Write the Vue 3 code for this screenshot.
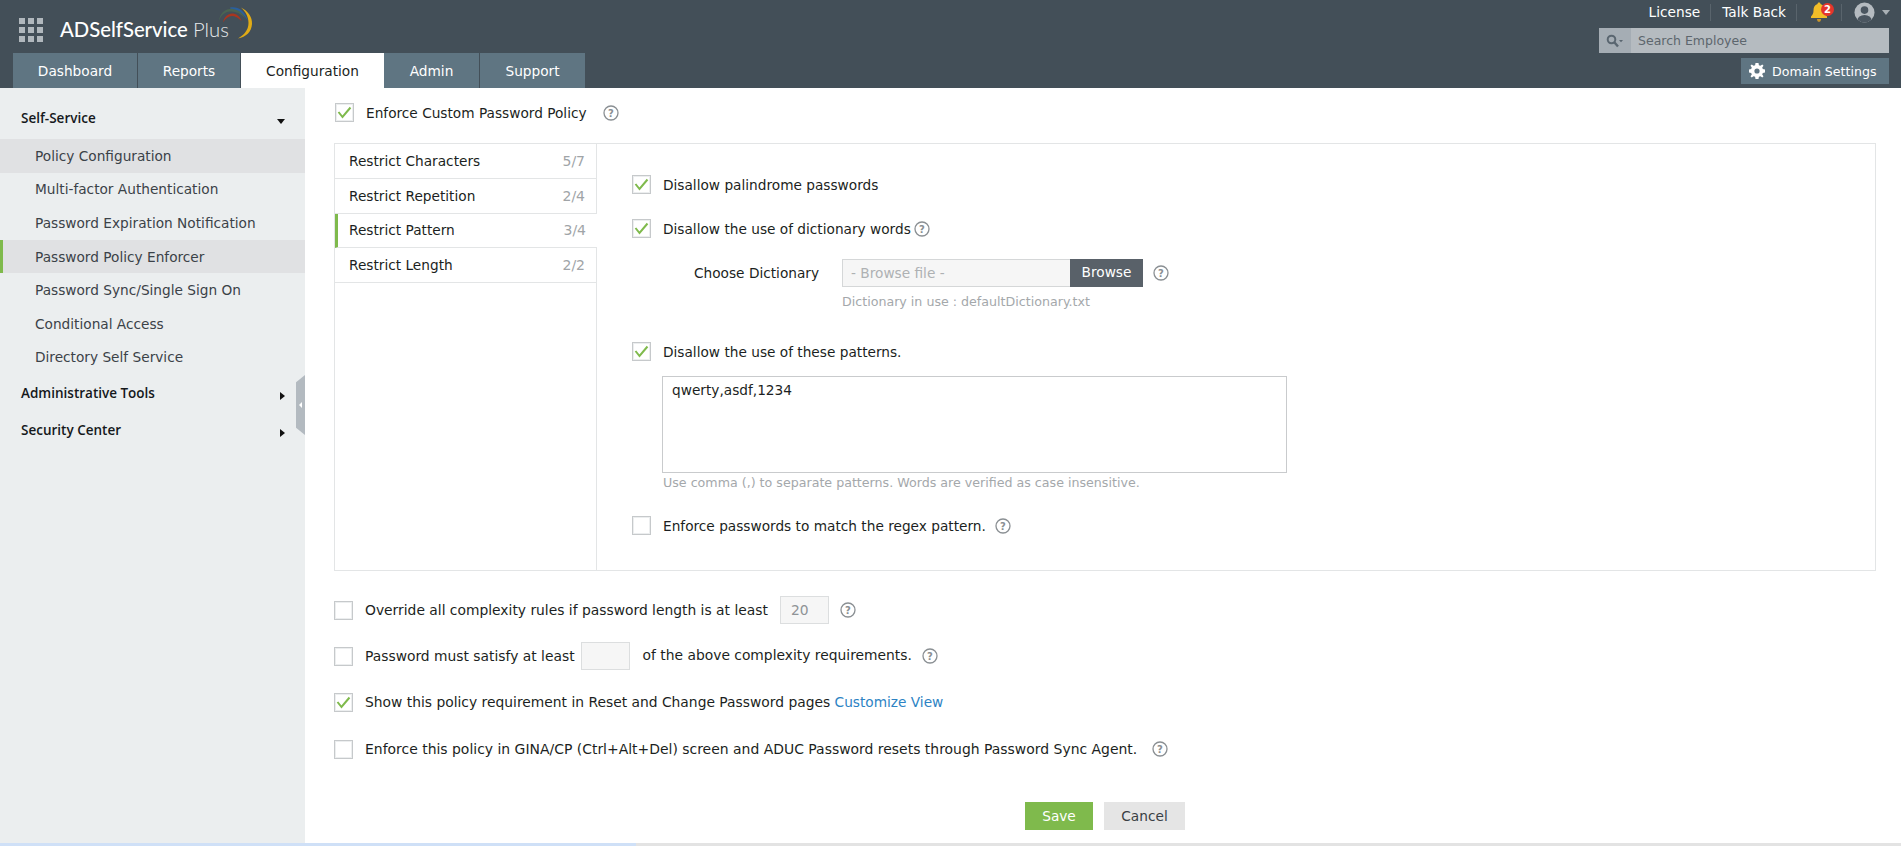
<script setup>
const tabs = [
  { label: 'Dashboard', w: 125 },
  { label: 'Reports', w: 103 },
  { label: 'Configuration', w: 143, active: true },
  { label: 'Admin', w: 96 },
  { label: 'Support', w: 106 }
]
const items = [
  { label: 'Policy Configuration', hl: true },
  { label: 'Multi-factor Authentication' },
  { label: 'Password Expiration Notification' },
  { label: 'Password Policy Enforcer', hl: true, bar: true },
  { label: 'Password Sync/Single Sign On' },
  { label: 'Conditional Access' },
  { label: 'Directory Self Service' }
]
const restricts = [
  { label: 'Restrict Characters', n: '5/7' },
  { label: 'Restrict Repetition', n: '2/4' },
  { label: 'Restrict Pattern', n: '3/4', active: true },
  { label: 'Restrict Length', n: '2/2' }
]
const dots = Array.from({ length: 9 })
</script>

<template>
  <div class="page">
    <header class="top">
      <div class="top-left">
        <div class="brand">
          <div class="grid"><i v-for="(d, i) in dots" :key="i"></i></div>
          <div class="logo">
            <span class="logo-b">ADSelfService</span> <span class="logo-l">Plus</span>
            <svg class="arc" width="35" height="33" viewBox="0 0 35 33">
              <path d="M23 1.500 C30 5 34.500 11 34 18 C33.500 26 28 31 20 32.500 C26 29 30.500 24 30.500 17 C30.500 11 28 6 23 1.500 Z" fill="#e0ab16"/>
              <path d="M12 1.500 C19 0 27 4 30 15 C26 8 20 4 13 4 Z" fill="#2a5f9e"/>
              <path d="M1 15 C2 6 9 2 15 3 C21 4 25 7 27 12 C22 7 17 5 12 5.500 C7 6 3 9 1 15 Z" fill="#4a6452"/>
              <path d="M5 16.500 C6 11 10 7.500 14 7.500 C18 7.500 22 10 23.500 15 C20 11.500 17 10 14 10 C10.500 10 7.500 12.500 5 16.500 Z" fill="#a8361f"/>
            </svg>
          </div>
        </div>
        <nav class="tabs">
          <a v-for="t in tabs" :key="t.label" class="tab" :class="{ active: t.active }" :style="{ width: t.w + 'px' }">{{ t.label }}</a>
        </nav>
      </div>
      <div class="top-right">
        <div class="links">
          <span class="lnk">License</span>
          <span class="sep s1"></span>
          <span class="lnk">Talk Back</span>
          <span class="sep s2"></span>
          <span class="bell">
            <svg width="16" height="20" viewBox="0 0 16 20"><path d="M8 0.500 C9 0.500 9.500 1.200 9.500 2 C12.500 3 13.500 5.500 13.500 8.500 C13.500 11.500 14.500 13 16 14.500 L16 16 L0 16 L0 14.500 C1.500 13 2.500 11.500 2.500 8.500 C2.500 5.500 3.500 3 6.500 2 C6.500 1.200 7 0.500 8 0.500 Z" fill="#f2bd28"/><path d="M6 17 L10 17 C10 19 9 19.800 8 19.800 C7 19.800 6 19 6 17 Z" fill="#c9962a"/></svg>
            <b class="badge">2</b>
          </span>
          <span class="sep s3"></span>
          <svg class="avatar" width="21" height="21" viewBox="0 0 22 22"><defs><clipPath id="av"><circle cx="11" cy="11" r="10.500"/></clipPath></defs><circle cx="11" cy="11" r="10.500" fill="#b5bbc0"/><g clip-path="url(#av)" fill="#4b5660"><circle cx="11" cy="8.500" r="4"/><ellipse cx="11" cy="19" rx="7.500" ry="5.500"/></g></svg>
          <span class="caret"></span>
        </div>
        <div class="search">
          <span class="search-ico">
            <svg width="18" height="14" viewBox="0 0 18 14"><circle cx="5.500" cy="5.500" r="3.800" fill="none" stroke="#5a6670" stroke-width="2"/><path d="M8.500 8.500 L12 12.500" stroke="#5a6670" stroke-width="2.400"/><path d="M13 6 L17 6 L15 8.200 Z" fill="#5a6670"/></svg>
          </span>
          <span class="search-txt">Search Employee</span>
        </div>
        <div class="domain">
          <svg width="16" height="16" viewBox="0 0 16 16"><path fill="#fff" fill-rule="evenodd" d="M6.500 0 H9.500 L9.900 2.200 L11.400 2.800 L13.300 1.500 L14.500 2.700 L13.200 4.600 L13.800 6.100 L16 6.500 V9.500 L13.800 9.900 L13.200 11.400 L14.500 13.300 L13.300 14.500 L11.400 13.200 L9.900 13.800 L9.500 16 H6.500 L6.100 13.800 L4.600 13.200 L2.700 14.500 L1.500 13.300 L2.800 11.400 L2.200 9.900 L0 9.500 V6.500 L2.200 6.100 L2.800 4.600 L1.500 2.700 L2.700 1.500 L4.600 2.800 L6.100 2.200 Z M8 5.400 A2.600 2.600 0 1 0 8 10.600 A2.600 2.600 0 1 0 8 5.400 Z"/></svg>
          <span>Domain Settings</span>
        </div>
      </div>
    </header>

    <div class="main">
      <aside class="side">
        <div class="group first">Self-Service<span class="tri-down"></span></div>
        <a v-for="it in items" :key="it.label" class="item" :class="{ hl: it.hl, bar: it.bar }">{{ it.label }}</a>
        <div class="group">Administrative Tools<span class="tri-right"></span></div>
        <div class="group">Security Center<span class="tri-right"></span></div>
        <div class="handle"><span></span></div>
      </aside>

      <section class="content">
        <div class="row head">
          <span class="cb"><svg viewBox="0 0 17 17"><path d="M2.500 8 L6.500 13 L14.500 3.500" fill="none" stroke="#7fba4c" stroke-width="2"/></svg></span>
          <span class="lbl">Enforce Custom Password Policy</span>
          <svg class="help h-head" viewBox="0 0 16 16"><circle cx="8" cy="8" r="7" /><text x="8" y="11.500">?</text></svg>
        </div>

        <div class="panel">
          <div class="rlist">
            <a v-for="r in restricts" :key="r.label" class="r" :class="{ active: r.active }"><span>{{ r.label }}</span><em>{{ r.n }}</em></a>
          </div>
          <div class="pane">
            <div class="row cb-row r1">
              <span class="cb"><svg viewBox="0 0 17 17"><path d="M2.500 8 L6.500 13 L14.500 3.500" fill="none" stroke="#7fba4c" stroke-width="2"/></svg></span>
              <span class="lbl">Disallow palindrome passwords</span>
            </div>
            <div class="row cb-row r2">
              <span class="cb"><svg viewBox="0 0 17 17"><path d="M2.500 8 L6.500 13 L14.500 3.500" fill="none" stroke="#7fba4c" stroke-width="2"/></svg></span>
              <span class="lbl">Disallow the use of dictionary words</span>
              <svg class="help h-dict" viewBox="0 0 16 16"><circle cx="8" cy="8" r="7" /><text x="8" y="11.500">?</text></svg>
            </div>
            <div class="dict">
              <span class="dict-l">Choose Dictionary</span>
              <span class="file">- Browse file -</span>
              <span class="browse">Browse</span>
              <svg class="help h-file" viewBox="0 0 16 16"><circle cx="8" cy="8" r="7" /><text x="8" y="11.500">?</text></svg>
            </div>
            <div class="note in-use">Dictionary in use : defaultDictionary.txt</div>
            <div class="row cb-row r3">
              <span class="cb"><svg viewBox="0 0 17 17"><path d="M2.500 8 L6.500 13 L14.500 3.500" fill="none" stroke="#7fba4c" stroke-width="2"/></svg></span>
              <span class="lbl">Disallow the use of these patterns.</span>
            </div>
            <div class="area">qwerty,asdf,1234</div>
            <div class="note hint">Use comma (,) to separate patterns. Words are verified as case insensitive.</div>
            <div class="row cb-row r4">
              <span class="cb"></span>
              <span class="lbl">Enforce passwords to match the regex pattern.</span>
              <svg class="help h-regex" viewBox="0 0 16 16"><circle cx="8" cy="8" r="7" /><text x="8" y="11.500">?</text></svg>
            </div>
          </div>
        </div>

        <div class="row opt o1">
          <span class="cb"></span>
          <span class="lbl">Override all complexity rules if password length is at least</span>
          <span class="num n1">20</span>
          <svg class="help h-o1" viewBox="0 0 16 16"><circle cx="8" cy="8" r="7" /><text x="8" y="11.500">?</text></svg>
        </div>
        <div class="row opt o2">
          <span class="cb"></span>
          <span class="lbl">Password must satisfy at least</span>
          <span class="num n2"></span>
          <span class="lbl after">of the above complexity requirements.</span>
          <svg class="help h-o2" viewBox="0 0 16 16"><circle cx="8" cy="8" r="7" /><text x="8" y="11.500">?</text></svg>
        </div>
        <div class="row opt o3">
          <span class="cb"><svg viewBox="0 0 17 17"><path d="M2.500 8 L6.500 13 L14.500 3.500" fill="none" stroke="#7fba4c" stroke-width="2"/></svg></span>
          <span class="lbl">Show this policy requirement in Reset and Change Password pages <a class="link">Customize View</a></span>
        </div>
        <div class="row opt o4">
          <span class="cb"></span>
          <span class="lbl">Enforce this policy in GINA/CP (Ctrl+Alt+Del) screen and ADUC Password resets through Password Sync Agent.</span>
          <svg class="help h-o4" viewBox="0 0 16 16"><circle cx="8" cy="8" r="7" /><text x="8" y="11.500">?</text></svg>
        </div>

        <div class="actions">
          <button class="btn save">Save</button>
          <button class="btn cancel">Cancel</button>
        </div>
      </section>
    </div>

    <div class="strip"><span class="strip-a"></span><span class="strip-b"></span></div>
  </div>
</template>

<style>
html, body { margin: 0; overflow: hidden; background: #fff; }
</style>

<style scoped>
.page {
  width: 1901px;
  height: 846px;
  display: flex;
  flex-direction: column;
  font-family: "DejaVu Sans", sans-serif;
  font-size: 13.700px;
  color: #1c1f22;
  overflow: hidden;
}
.top {
  height: 88px;
  flex: none;
  background: #434f58;
  display: flex;
  justify-content: space-between;
}
.top-left { padding-left: 13px; display: flex; flex-direction: column; justify-content: flex-end; }
.brand { display: flex; align-items: flex-start; height: 53px; padding-left: 6px; box-sizing: border-box; }
.grid { display: grid; grid-template-columns: repeat(3, 6px); grid-auto-rows: 6px; gap: 3px 3px; margin-top: 18px; }
.grid i { background: #b1b8bd; }
.logo { position: relative; margin-left: 17px; margin-top: 17px; color: #fff; font-family: "Lato", "Open Sans", sans-serif; font-size: 20.300px; line-height: 24px; white-space: nowrap; }
.logo-b { font-weight: 500; }
.logo-l { font-weight: 300; color: #e6e9eb; }
.arc { position: absolute; left: 158px; top: -11px; }
.tabs { display: flex; height: 35px; }
.tab {
  box-sizing: border-box;
  background: #5f7582;
  color: #fff;
  display: flex;
  align-items: center;
  justify-content: center;
  border-right: 1px solid #434f58;
}
.tab.active { background: #fff; color: #1c1f22; border-right: 0; }
.top-right { width: 290px; margin-right: 12px; display: flex; flex-direction: column; align-items: stretch; }
.links { height: 28px; display: flex; align-items: center; justify-content: flex-end; color: #fff; padding-bottom: 4px; box-sizing: border-box; margin-right: -1px; }
.sep { width: 1px; height: 17px; background: #59646c; }
.s1 { margin: 0 11px 0 10px; }
.s2 { margin: 0 14px 0 10px; }
.s3 { margin: 0 12px 0 10px; }
.bell { position: relative; width: 20px; height: 20px; }
.badge { position: absolute; left: 10px; top: 1px; width: 13px; height: 13px; border-radius: 50%; background: #e5352c; color: #fff; font-size: 10px; line-height: 13px; text-align: center; }
.caret { width: 0; height: 0; border: 4px solid transparent; border-top: 5px solid #a9b0b5; border-bottom: 0; margin-left: 7px; }
.search { height: 25px; display: flex; background: #b5bbc0; }
.search-ico { width: 32px; background: #a5adb4; display: flex; align-items: center; justify-content: center; }
.search-txt { padding-left: 7px; line-height: 25px; color: #5d666d; font-size: 12.500px; }
.domain {
  align-self: flex-end;
  margin-top: 5px;
  width: 148px;
  height: 26px;
  box-sizing: border-box;
  background: #5f7582;
  color: #fff;
  font-size: 12.600px;
  display: flex;
  align-items: center;
  gap: 7px;
  padding-left: 8px;
}
.main { flex: 1; display: flex; min-height: 0; }
.side { width: 305px; flex: none; background: #ebeeef; box-sizing: border-box; padding-top: 14px; position: relative; }
.group {
  height: 37px;
  display: flex;
  align-items: center;
  justify-content: space-between;
  padding: 0 20px 0 21px;
  font-family: "Open Sans", sans-serif;
  font-weight: 600;
  font-size: 13.500px;
  color: #15181b;
}
.group.first { padding-bottom: 6px; box-sizing: border-box; }
.tri-down { width: 0; height: 0; border: 4.500px solid transparent; border-top: 5px solid #111; border-bottom: 0; margin-top: 7px; }
.tri-right { width: 0; height: 0; border: 4.500px solid transparent; border-left: 5px solid #111; border-right: 0; margin-top: 6px; }
.item { display: flex; align-items: center; height: 33.600px; padding-left: 35px; color: #3b4248; box-sizing: border-box; }
.item.hl { background: #e0e1e3; }
.item.bar { border-left: 3px solid #7fba4c; padding-left: 32px; }
.handle {
  position: absolute;
  left: 296px;
  top: 287px;
  width: 9px;
  height: 60px;
  background: #b3bac0;
  clip-path: polygon(100% 0, 100% 100%, 0 88%, 0 12%);
  display: flex;
  align-items: center;
  justify-content: center;
}
.handle span { width: 0; height: 0; border: 3px solid transparent; border-right: 3px solid #fff; border-left: 0; }
.content { flex: 1; padding: 0 25px 0 30px; min-width: 0; }
.row { display: flex; align-items: center; }
.cb {
  width: 19px;
  height: 19px;
  flex: none;
  box-sizing: border-box;
  border: 1px solid #c6c9cb;
  box-shadow: inset 0 0 0 1px #eceeef;
  background: #fff;
  display: block;
}
.cb svg { display: block; width: 17px; height: 17px; }
.lbl { margin-left: 12px; white-space: nowrap; }
.help { width: 16px; height: 16px; flex: none; }
.help circle { fill: none; stroke: #8a8f93; stroke-width: 1.300; }
.help text { fill: #8a8f93; font-size: 10px; font-weight: 700; text-anchor: middle; font-family: "DejaVu Sans", sans-serif; }
.head { height: 19px; margin-top: 15px; }
.h-head { margin-left: 16px; }
.panel { margin-top: 21px; height: 428px; box-sizing: border-box; border: 1px solid #e3e5e6; display: flex; margin-left: -1px; }
.rlist { width: 262px; flex: none; border-right: 1px solid #e3e5e6; box-sizing: border-box; }
.r {
  display: flex;
  align-items: center;
  justify-content: space-between;
  height: 34.750px;
  box-sizing: border-box;
  padding: 0 11px 0 14px;
  border-bottom: 1px solid #e3e5e6;
}
.r em { font-style: normal; color: #a0a4a7; font-size: 14px; }
.r.active { border-left: 3px solid #7fba4c; padding-left: 11px; width: 262px; background: #fff; position: relative; }
.pane { flex: 1; padding-left: 35px; }
.cb-row { height: 19px; }
.r1 { margin-top: 31px; }
.r2 { margin-top: 25px; }
.h-dict { margin-left: 3px; }
.dict { display: flex; align-items: center; height: 28px; margin-top: 21px; }
.dict-l { margin-left: 62px; width: 148px; flex: none; margin-top: -1px; }
.file { width: 228px; height: 28px; box-sizing: border-box; border: 1px solid #d5d7d8; border-right: 0; background: #f6f6f6; color: #aeb1b3; padding-left: 8px; line-height: 26px; }
.browse { width: 73px; height: 28px; background: #596169; color: #fff; text-align: center; line-height: 26px; }
.h-file { margin-left: 10px; }
.note { color: #a4a8ab; font-size: 12.650px; line-height: 16px; }
.in-use { margin-top: 7px; margin-left: 210px; }
.r3 { margin-top: 32px; }
.area { margin-top: 15px; margin-left: 30px; width: 625px; height: 97px; box-sizing: border-box; border: 1px solid #c9cbcd; padding: 5px 9px; line-height: 16px; }
.hint { margin-top: 2px; margin-left: 31px; }
.r4 { margin-top: 25px; }
.h-regex { margin-left: 9px; }
.opt { height: 28px; margin-left: -1px; font-size: 13.850px; }
.o1 { margin-top: 25px; }
.o2, .o3 { margin-top: 18px; }
.o4 { margin-top: 19px; font-size: 13.950px; }
.num { width: 49px; height: 28px; box-sizing: border-box; border: 1px solid #dcdedf; background: #f6f6f6; flex: none; color: #8f9396; padding-left: 10px; line-height: 26px; }
.n1 { margin-left: 12px; }
.n2 { margin-left: 6px; }
.after { margin-left: 13px; margin-top: -2px; }
.h-o1 { margin-left: 11px; }
.h-o2 { margin-left: 10px; }
.h-o4 { margin-left: 15px; }
.link { color: #2d83c4; font-size: 13.700px; }
.actions { display: flex; justify-content: center; gap: 11px; margin-top: 39px; margin-left: -1px; }
.btn { height: 28px; border: 0; font: inherit; padding: 0; }
.save { width: 68px; background: #7fba4c; color: #fff; }
.cancel { width: 81px; background: #e5e5e5; color: #3a3f44; }
.strip { height: 3px; flex: none; display: flex; }
.strip-a { width: 636px; background: #cfe0f7; }
.strip-b { flex: 1; background: #e3e3e3; }
</style>
